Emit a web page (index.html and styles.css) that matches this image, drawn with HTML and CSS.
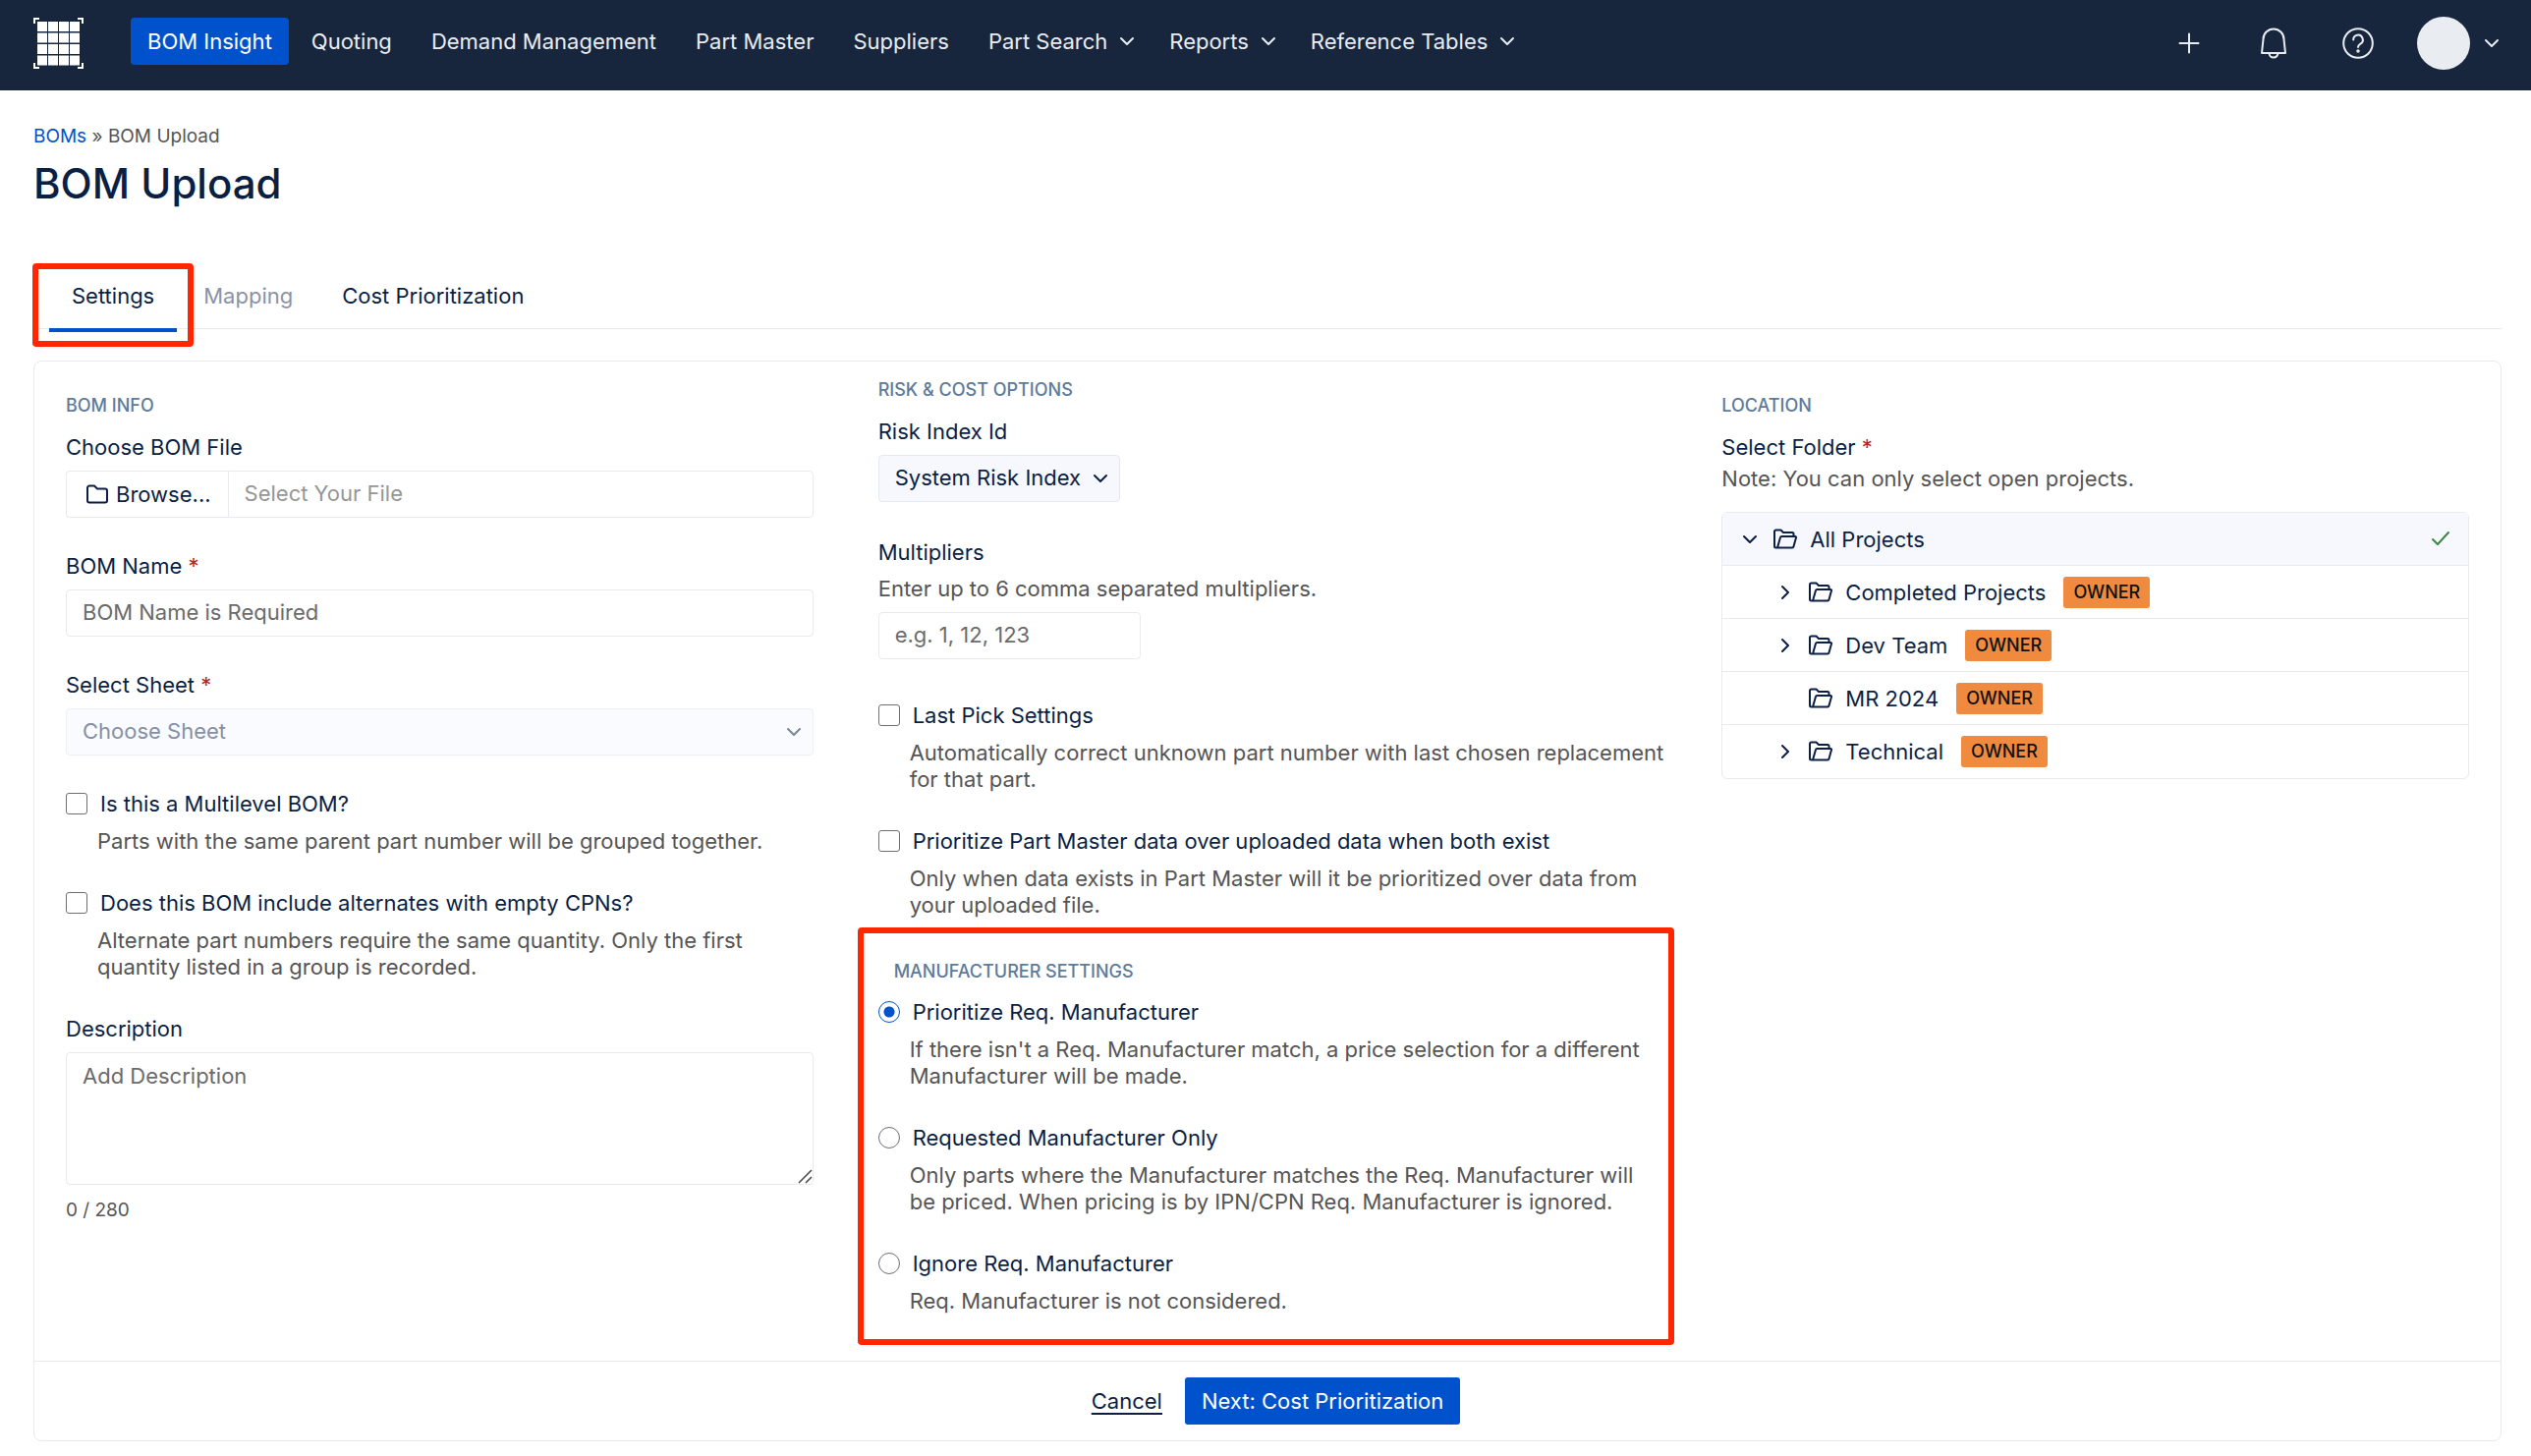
FILE: index.html
```html
<!DOCTYPE html>
<html lang="en">
<head>
<meta charset="utf-8">
<meta name="viewport" content="width=device-width, initial-scale=1">
<title>BOM Upload</title>
<link rel="stylesheet" href="styles.css">
</head>
<body>
<svg class="sprite" aria-hidden="true">
  <symbol id="chevron-down" viewBox="0 0 16 16"><path d="M2 5l6 6 6-6"/></symbol>
  <symbol id="chevron-right" viewBox="0 0 16 16"><path d="M5 2l6 6-6 6"/></symbol>
  <symbol id="folder" viewBox="0 0 24 24"><path d="M2 5.500a2 2 0 0 1 2-2h5l3 3h8a2 2 0 0 1 2 2v10a2 2 0 0 1-2 2H4a2 2 0 0 1-2-2z"/></symbol>
  <symbol id="folder-open" viewBox="0 0 24 24"><path d="M4 20.500H2.500A1.500 1.500 0 0 1 1 19V4a1.500 1.500 0 0 1 1.500-1.500h5L10 5h9a1.500 1.500 0 0 1 1.500 1.500V9M4 20.500L7 10a1.500 1.500 0 0 1 1.500-1H22a1 1 0 0 1 1 1.300l-2.500 9a1.500 1.500 0 0 1-1.500 1.200z"/></symbol>
</svg>

<header class="topbar">
  <a class="logo" href="#" aria-label="Home">
    <svg viewBox="0 0 51 52" width="51" height="52">
      <g fill="#fff">
        <path d="M0 0h6v2H2v4H0zM45 0h6v6h-2V2h-4zM0 46h2v4h4v2H0zM49 46h2v6h-6v-2h4z"/>
        <path d="M4 4h10v10H4zM15 4h10v10H15zM26 4h10v10H26zM37 4h10v10H37zM4 15.500h10v10H4zM15 15.500h10v10H15zM26 15.500h10v10H26zM37 15.500h10v10H37zM4 27h10v10H4zM15 27h10v10H15zM26 27h10v10H26zM37 27h10v10H37zM4 38.500h10v10H4zM15 38.500h10v10H15zM26 38.500h10v10H26zM37 38.500h10v10H37z"/>
      </g>
    </svg>
  </a>
  <nav class="menu">
    <a class="menu-item menu-item-active" href="#">BOM Insight</a>
    <a class="menu-item" href="#">Quoting</a>
    <a class="menu-item" href="#">Demand Management</a>
    <a class="menu-item" href="#">Part Master</a>
    <a class="menu-item" href="#">Suppliers</a>
    <button class="menu-item" type="button">Part Search <svg class="icon chevron"><use href="#chevron-down"/></svg></button>
    <button class="menu-item" type="button">Reports <svg class="icon chevron"><use href="#chevron-down"/></svg></button>
    <button class="menu-item" type="button">Reference Tables <svg class="icon chevron"><use href="#chevron-down"/></svg></button>
  </nav>
  <div class="tools">
    <button class="tool" type="button" aria-label="Add"><svg class="icon" viewBox="0 0 32 32"><path d="M16 6.500v19M6.500 16h19"/></svg></button>
    <button class="tool" type="button" aria-label="Notifications"><svg class="icon" viewBox="0 0 32 32"><path d="M4 26L5.500 12a10.500 10.500 0 0 1 21 0L28 26zM11.500 26a4.500 4.500 0 0 0 9 0"/></svg></button>
    <button class="tool" type="button" aria-label="Help"><svg class="icon" viewBox="0 0 32 32"><circle cx="16" cy="16" r="14.800"/><path d="M11.200 12.500a4.800 4.800 0 1 1 7.200 4.100c-1.600.9-2.400 1.500-2.400 3.400"/><circle cx="16" cy="24" r=".8"/></svg></button>
    <button class="profile" type="button" aria-label="Account"><span class="avatar"></span><svg class="icon chevron"><use href="#chevron-down"/></svg></button>
  </div>
</header>

<main class="page">
  <nav class="breadcrumb"><a href="#">BOMs</a> » BOM Upload</nav>
  <h1>BOM Upload</h1>

  <div class="tabs">
    <button class="tab tab-active" type="button">Settings<span class="highlight highlight-tab"></span></button>
    <button class="tab tab-disabled" type="button" disabled>Mapping</button>
    <button class="tab" type="button">Cost Prioritization</button>
  </div>

  <form class="card">
    <div class="columns">
      <section class="column">
        <h2>BOM INFO</h2>
        <div class="field">
          <label for="file">Choose BOM File</label>
          <div class="file">
            <button class="browse" type="button"><svg class="icon"><use href="#folder"/></svg>Browse...</button>
            <input id="file" class="file-name" type="text" placeholder="Select Your File">
          </div>
        </div>
        <div class="field">
          <label for="name">BOM Name <span class="required">*</span></label>
          <input id="name" type="text" placeholder="BOM Name is Required">
        </div>
        <div class="field">
          <label for="sheet">Select Sheet <span class="required">*</span></label>
          <div class="select select-disabled">
            <select id="sheet" disabled><option>Choose Sheet</option></select>
            <svg class="icon chevron"><use href="#chevron-down"/></svg>
          </div>
        </div>
        <div class="option">
          <input id="multilevel" type="checkbox">
          <label for="multilevel">Is this a Multilevel BOM?</label>
          <p>Parts with the same parent part number will be grouped together.</p>
        </div>
        <div class="option">
          <input id="alternates" type="checkbox">
          <label for="alternates">Does this BOM include alternates with empty CPNs?</label>
          <p>Alternate part numbers require the same quantity. Only the first quantity listed in a group is recorded.</p>
        </div>
        <div class="field">
          <label for="description">Description</label>
          <textarea id="description" placeholder="Add Description"></textarea>
          <p class="counter">0 / 280</p>
        </div>
      </section>

      <section class="column column-middle">
        <h2>RISK &amp; COST OPTIONS</h2>
        <div class="field">
          <label for="risk">Risk Index Id</label>
          <div class="select select-inline">
            <select id="risk"><option>System Risk Index</option></select>
            <svg class="icon chevron"><use href="#chevron-down"/></svg>
          </div>
        </div>
        <div class="field field-spaced">
          <label for="multipliers">Multipliers</label>
          <p>Enter up to 6 comma separated multipliers.</p>
          <input id="multipliers" class="short" type="text" placeholder="e.g. 1, 12, 123">
        </div>
        <div class="option">
          <input id="last-pick" type="checkbox">
          <label for="last-pick">Last Pick Settings</label>
          <p>Automatically correct unknown part number with last chosen replacement for that part.</p>
        </div>
        <div class="option">
          <input id="prioritize" type="checkbox">
          <label for="prioritize">Prioritize Part Master data over uploaded data when both exist</label>
          <p>Only when data exists in Part Master will it be prioritized over data from your uploaded file.</p>
        </div>
        <section class="manufacturer">
          <h2>MANUFACTURER SETTINGS</h2>
          <div class="option">
            <input id="m-prioritize" type="radio" name="manufacturer" checked>
            <label for="m-prioritize">Prioritize Req. Manufacturer</label>
            <p>If there isn't a Req. Manufacturer match, a price selection for a different Manufacturer will be made.</p>
          </div>
          <div class="option">
            <input id="m-only" type="radio" name="manufacturer">
            <label for="m-only">Requested Manufacturer Only</label>
            <p>Only parts where the Manufacturer matches the Req. Manufacturer will be priced. When pricing is by IPN/CPN Req. Manufacturer is ignored.</p>
          </div>
          <div class="option">
            <input id="m-ignore" type="radio" name="manufacturer">
            <label for="m-ignore">Ignore Req. Manufacturer</label>
            <p>Req. Manufacturer is not considered.</p>
          </div>
          <span class="highlight highlight-section"></span>
        </section>
      </section>

      <section class="column">
        <h2>LOCATION</h2>
        <h3>Select Folder <span class="required">*</span></h3>
        <p class="note">Note: You can only select open projects.</p>
        <ul class="tree">
          <li class="row row-selected"><svg class="icon chevron"><use href="#chevron-down"/></svg><svg class="icon folder"><use href="#folder-open"/></svg><span>All Projects</span><svg class="icon check" viewBox="0 0 18 18"><path d="M1 9l5 5L17 2"/></svg></li>
          <li class="row row-child"><svg class="icon chevron"><use href="#chevron-right"/></svg><svg class="icon folder"><use href="#folder-open"/></svg><span>Completed Projects</span><span class="badge">OWNER</span></li>
          <li class="row row-child"><svg class="icon chevron"><use href="#chevron-right"/></svg><svg class="icon folder"><use href="#folder-open"/></svg><span>Dev Team</span><span class="badge">OWNER</span></li>
          <li class="row row-child"><svg class="icon chevron"></svg><svg class="icon folder"><use href="#folder-open"/></svg><span>MR 2024</span><span class="badge">OWNER</span></li>
          <li class="row row-child"><svg class="icon chevron"><use href="#chevron-right"/></svg><svg class="icon folder"><use href="#folder-open"/></svg><span>Technical</span><span class="badge">OWNER</span></li>
        </ul>
      </section>
    </div>
    <footer class="actions">
      <a class="cancel" href="#">Cancel</a>
      <button class="next" type="button">Next: Cost Prioritization</button>
    </footer>
  </form>
</main>
</body>
</html>
```
FILE: styles.css
```css
:root {
  --navy: #18263d;
  --ink: #0b1f44;
  --text: #555;
  --blue: #0052cc;
  --line: #e8eaed;
  --tint: #f6f8fd;
  --red: #ff2600;
}

* { box-sizing: border-box; }

body {
  margin: 0;
  background: #fff;
  color: var(--text);
  font: 22px/28px Inter, "Liberation Sans", sans-serif;
}

h1, h2, h3, p, ul { margin: 0; padding: 0; }

button, input, select, textarea {
  font: inherit;
  color: var(--ink);
  margin: 0;
}

button { border: 0; background: none; padding: 0; cursor: pointer; }

a { color: var(--blue); text-decoration: none; }

.sprite { position: absolute; width: 0; height: 0; }

.icon {
  flex: none;
  fill: none;
  stroke: currentColor;
  stroke-width: 2;
  stroke-linecap: round;
  stroke-linejoin: round;
}

.chevron { width: 16px; height: 16px; }

/* Top bar */
.topbar {
  display: flex;
  align-items: flex-start;
  height: 92px;
  padding: 18px 32px 0 34px;
  background: var(--navy);
  color: #e9edf3;
}

.logo { display: flex; margin-right: 48px; }

.menu { display: flex; gap: 6px; }

.menu-item {
  display: flex;
  align-items: center;
  gap: 12px;
  height: 48px;
  padding: 0 17px;
  border-radius: 4px;
  color: inherit;
  white-space: nowrap;
}

.menu-item .chevron { margin-right: -5px; }

.menu-item-active { background: var(--blue); color: #fff; }

.tools { display: flex; align-items: center; gap: 54px; height: 52px; margin-left: auto; }

.tool { display: flex; color: inherit; }
.tool .icon { width: 32px; height: 32px; }

.profile { display: flex; align-items: center; gap: 14px; color: inherit; margin-left: -10px; }
.avatar { width: 54px; height: 54px; border-radius: 50%; background: #e9edf2; }

/* Page head */
.page { padding: 35px 30px 15px 34px; }

.breadcrumb { font-size: 19px; line-height: 24px; }

h1 {
  margin-top: 10px;
  color: var(--ink);
  font-size: 42px;
  line-height: 52px;
  font-weight: 500;
}

.tabs {
  display: flex;
  gap: 4px;
  margin-top: 55px;
  padding-left: 16px;
  border-bottom: 1px solid var(--line);
}

.tab {
  position: relative;
  margin-bottom: -4px;
  padding: 19px 23px;
  border-bottom: 4px solid transparent;
  white-space: nowrap;
}

.tab-active { border-color: var(--blue); }
.tab-disabled { color: #8a93a5; }

.highlight {
  position: absolute;
  border: 6px solid var(--red);
  border-radius: 4px;
  pointer-events: none;
}

.highlight-tab { inset: 0 -17px -19px; }
.highlight-section { inset: -33px -18px -31px -21px; }

/* Card */
.card {
  margin-top: 32px;
  border: 1px solid var(--line);
  border-radius: 8px;
}

.columns {
  display: grid;
  grid-template-columns: repeat(3, minmax(0, 1fr));
  gap: 82px;
  padding: 33px 32px 47px;
}

.column-middle { margin: -16px -32px 0 -16px; }

h2 {
  margin-bottom: 16px;
  color: #5d7b9a;
  font-size: 18px;
  line-height: 24px;
  font-weight: 500;
}

h3 { font-size: 22px; line-height: 28px; font-weight: 400; color: var(--ink); }

label { color: var(--ink); }

.required { color: #b3261e; line-height: 20px; }

.field {
  display: flex;
  flex-direction: column;
  align-items: stretch;
  gap: 10px;
  margin-bottom: 35px;
}

.field-spaced { margin-bottom: 43px; }

.field p, .option p { line-height: 27px; }

input[type="text"], textarea {
  width: 100%;
  padding: 0 16px 3px;
  border: 1px solid var(--line);
  border-radius: 4px;
  background: #fff;
}

input[type="text"] { height: 48px; }

textarea { display: block; height: 135px; padding: 9px 16px; }

textarea::-webkit-resizer {
  background: url("data:image/svg+xml,%3Csvg xmlns='http://www.w3.org/2000/svg' viewBox='0 0 15 15'%3E%3Cpath d='M1 14L14 1M8 14l6-6' stroke='%23444' stroke-width='1.500'/%3E%3C/svg%3E") center / 100% no-repeat;
}

::placeholder { color: #6b6b6b; opacity: 1; }

input.short { width: 267px; }

.file { display: flex; }

.browse {
  display: flex;
  align-items: center;
  gap: 7px;
  flex: none;
  height: 48px;
  padding: 0 17px 0 19px;
  border: 1px solid var(--line);
  border-right: 0;
  border-radius: 4px 0 0 4px;
}

.browse .icon { width: 24px; height: 24px; }

input.file-name { border-radius: 0 4px 4px 0; }
.file-name::placeholder { color: #969696; }

.select { display: grid; align-items: center; }

.select select, .select .icon { grid-area: 1 / 1; }

.select .icon { justify-self: end; margin-right: 12px; color: var(--ink); pointer-events: none; }

.select select {
  appearance: none;
  width: 100%;
  height: 48px;
  padding: 0 38px 3px 16px;
  border: 1px solid #e4e8f0;
  border-radius: 4px;
  background: var(--tint);
  opacity: 1;
}

.select-inline { align-self: flex-start; margin-bottom: 2px; }

.select-disabled select { background: #fafbff; border-color: #eef0f6; color: #8690a3; }
.select-disabled .icon { color: #7a8599; }

.option {
  display: grid;
  grid-template-columns: 22px minmax(0, 1fr);
  align-items: center;
  column-gap: 13px;
  row-gap: 11px;
  margin-bottom: 35px;
}

.option p { grid-column: 1 / -1; padding-left: 32px; }

.option input {
  appearance: none;
  width: 22px;
  height: 22px;
  border: 1px solid #6f6f6f;
  border-radius: 3px;
  background: #fff;
}

.option input[type="radio"] { border-radius: 50%; }

.option input[type="radio"]:checked {
  border-color: var(--blue);
  background: radial-gradient(circle, var(--blue) 5px, #fff 6px);
}

.counter { margin-top: 2px; font-size: 19px; }

.manufacturer { position: relative; margin-top: 42px; margin-right: 16px; }
.manufacturer h2 { margin: 0 16px 15px; }
.manufacturer .option:nth-of-type(3), .column > .field:last-child { margin-bottom: 0; }

/* Folder tree */
.note { margin: 4px 0 20px; }

.tree {
  list-style: none;
  border: 1px solid var(--line);
  border-radius: 6px;
  color: var(--ink);
}

.row {
  display: flex;
  align-items: center;
  height: 54px;
  padding: 0 19px 0 20px;
  border-bottom: 1px solid var(--line);
}

.row:last-child { border-bottom: 0; }
.row-selected { background: var(--tint); }
.row-child { padding-left: 56px; }

.folder { width: 24px; height: 24px; margin: 0 13px 0 16px; }

.check { width: 18px; height: 18px; margin-left: auto; color: #3c8646; }

.badge {
  margin-left: 18px;
  padding: 2px 10px;
  border-radius: 3px;
  background: #f08a3e;
  color: #111;
  font-size: 18px;
  font-weight: 500;
}

/* Footer */
.actions {
  display: flex;
  justify-content: center;
  align-items: center;
  gap: 6px;
  padding: 16px;
  border-top: 1px solid var(--line);
}

.cancel { padding: 0 17px; color: var(--ink); text-decoration: underline; text-underline-offset: 4px; }

.next {
  height: 48px;
  padding: 0 17px;
  border-radius: 3px;
  background: var(--blue);
  color: #fff;
}
```
